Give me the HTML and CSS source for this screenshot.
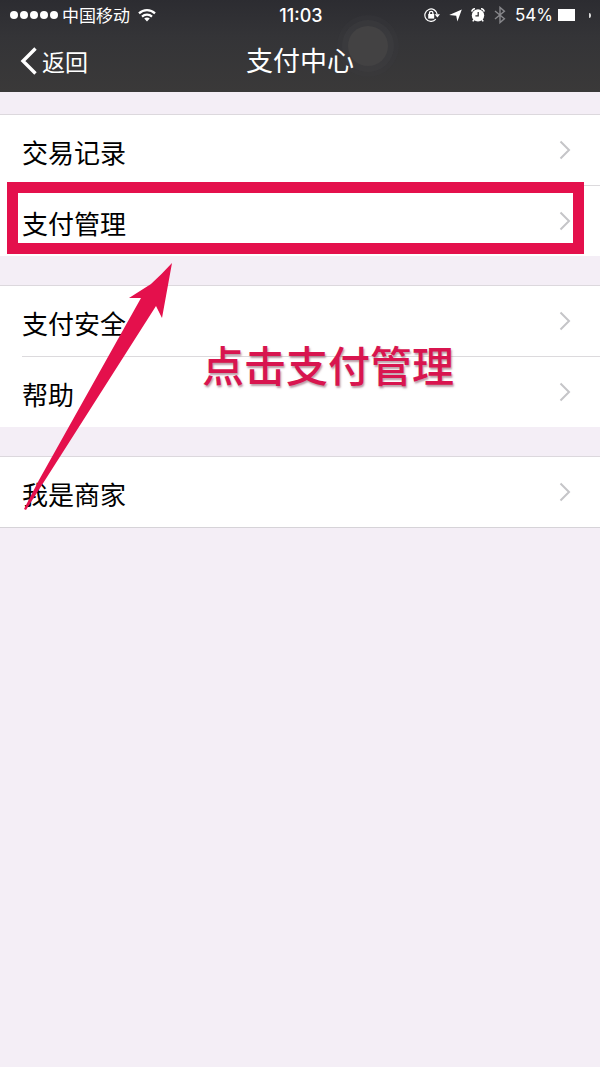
FILE: index.html
```html
<!DOCTYPE html>
<html lang="zh-CN">
<head>
  <meta charset="UTF-8">
  <meta name="viewport" content="width=device-width, initial-scale=1.0">
  <title>支付中心</title>
  <link rel="stylesheet" href="styles.css">
</head>
<body>
  <header class="header">
    <div class="status-bar">
      <div class="status-left">
        <div class="signal">
          <span class="dot"></span>
          <span class="dot"></span>
          <span class="dot"></span>
          <span class="dot"></span>
          <span class="dot"></span>
        </div>
        <span class="carrier">中国移动</span>
        <svg class="wifi" width="18" height="14" viewBox="0 0 18 14" fill="none" stroke="#fff" stroke-width="2.2">
          <path d="M1 5.4C5.4 1 12.6 1 17 5.4"/>
          <path d="M4 8.6C6.8 6 11.2 6 14 8.6"/>
          <path d="M9 13.4L6.2 10.6C7.8 9.2 10.2 9.2 11.8 10.6Z" fill="#fff" stroke="none"/>
        </svg>
      </div>
      <span class="time">11:03</span>
      <div class="status-right">
        <svg width="16" height="14" viewBox="0 0 16 14" fill="none" stroke="#fff">
          <path d="M11.8 11.2A6.2 6.2 0 1 1 13.2 6.4" stroke-width="1.2"/>
          <path d="M10.6 6.2H16L13.4 9.6Z" fill="#fff" stroke="none"/>
          <path d="M5.5 6.5V5a1.7 1.7 0 0 1 3.4 0V6.5" stroke-width="1.3"/>
          <rect x="4.2" y="6" width="6" height="4.6" fill="#fff" stroke="none"/>
        </svg>
        <svg width="13" height="13" viewBox="0 0 13 13" fill="#fff">
          <path d="M12.8 0.4L8.4 12.6L7.2 6.8L0.2 6Z"/>
        </svg>
        <svg width="14" height="14" viewBox="0 0 14 14">
          <circle cx="7" cy="7.4" r="6.2" fill="#fff"/>
          <path d="M0.8 3.6A3 3 0 0 1 4 0.8M10 0.8A3 3 0 0 1 13.2 3.6M3.2 11.4L1.8 13.4M10.8 11.4L12.2 13.4" fill="none" stroke="#fff" stroke-width="1.6"/>
          <path d="M7.2 4V7.8H4.4" fill="none" stroke="#333336" stroke-width="1.3"/>
        </svg>
        <svg width="12" height="18" viewBox="0 0 12 18" fill="none" stroke="#87878b" stroke-width="1.4">
          <path d="M1 5L10.4 12.8L6 16.6V1.4L10.4 5.2L1 13"/>
        </svg>
        <span class="percent">54%</span>
        <span class="battery"></span>
      </div>
    </div>
    <nav class="nav-bar">
      <a class="back" href="#">
        <svg width="17" height="28" viewBox="0 0 17 28" fill="none" stroke="#fff" stroke-width="3.4">
          <path d="M15.5 1.5L3 14L15.5 26.5"/>
        </svg>
        返回
      </a>
      <h1 class="title">支付中心</h1>
      <span class="touch-dot"></span>
    </nav>
  </header>

  <main class="content">
    <section class="group">
      <a class="row" href="#">交易记录
        <svg class="chevron" viewBox="0 0 12 20"><path d="M1.5 1.5L10 10L1.5 18.5"/></svg>
      </a>
      <a class="row highlighted" href="#">支付管理
        <svg class="chevron" viewBox="0 0 12 20"><path d="M1.5 1.5L10 10L1.5 18.5"/></svg>
      </a>
    </section>

    <section class="group">
      <a class="row" href="#">支付安全
        <svg class="chevron" viewBox="0 0 12 20"><path d="M1.5 1.5L10 10L1.5 18.5"/></svg>
      </a>
      <a class="row" href="#">帮助
        <svg class="chevron" viewBox="0 0 12 20"><path d="M1.5 1.5L10 10L1.5 18.5"/></svg>
      </a>
    </section>

    <section class="group group-last">
      <a class="row" href="#">我是商家
        <svg class="chevron" viewBox="0 0 12 20"><path d="M1.5 1.5L10 10L1.5 18.5"/></svg>
      </a>
    </section>

    <!-- guide arrow and label over the list -->
    <svg class="arrow" width="150" height="250" viewBox="0 0 150 250">
      <path d="M148 0L138 55L132 43L2 247L0 246L15 217L117 35H105Q116 28 127 21Q137 12 148 0Z"/>
    </svg>
    <p class="callout">点击支付管理</p>
  </main>
</body>
</html>
```

FILE: styles.css
```css
*,
*::before,
*::after {
  margin: 0;
  padding: 0;
  box-sizing: border-box;
}

body {
  font-family: "Noto Sans CJK SC", "Liberation Sans", sans-serif;
  background: #f4eef6;
  color: #000;
  min-height: 100vh;
}

a {
  color: inherit;
  text-decoration: none;
}

.header {
  background: linear-gradient(#2c2c31, #343437 40%, #3a3939);
  color: #fff;
}

/* status bar */
.status-bar {
  display: grid;
  grid-template-columns: 1fr auto 1fr;
  align-items: center;
  height: 30px;
  padding: 0 8px 0 10px;
}

.status-left {
  display: flex;
  align-items: center;
}

.signal {
  display: flex;
  gap: 2px;
  margin-right: 4px;
}

.dot {
  width: 8px;
  height: 8px;
  border-radius: 50%;
  background: #fff;
}

.carrier {
  font-size: 17px;
  line-height: 24px;
  margin-right: 8px;
}

.time {
  font-family: Inter, sans-serif;
  font-size: 18px;
  font-weight: 500;
}

.status-right {
  display: flex;
  align-items: center;
  justify-content: flex-end;
  gap: 9px;
}

.percent {
  font-family: Inter, sans-serif;
  font-size: 17px;
}

.battery {
  position: relative;
  width: 17px;
  height: 12px;
  margin-left: -4px;
  margin-right: 17px;
  background: #fff;
}

.battery::after {
  content: "";
  position: absolute;
  top: 4px;
  right: -16px;
  width: 2px;
  height: 5px;
  border-radius: 0 2px 2px 0;
  background: #dcdcdc;
}

/* navigation bar */
.nav-bar {
  position: relative;
  display: grid;
  grid-template-columns: 1fr auto 1fr;
  align-items: center;
  height: 62px;
  padding: 0 20px;
}

.back {
  display: flex;
  align-items: center;
  gap: 5px;
  font-size: 23px;
  line-height: 32px;
}

.title {
  position: relative;
  z-index: 1;
  font-size: 27px;
  line-height: 36px;
  font-weight: 400;
  padding-bottom: 2px;
}

.touch-dot {
  position: absolute;
  top: -4px;
  left: 58%;
  width: 40px;
  height: 40px;
  border-radius: 50%;
  background: #434243;
  box-shadow: 0 0 0 6px rgba(66, 66, 70, 0.35), 0 0 0 11px rgba(60, 60, 65, 0.25);
}

/* list */
.content {
  position: relative;
  padding-top: 22px;
}

.group {
  background: #fff;
  border-top: 1px solid #dcd8dd;
  margin-bottom: 29px;
}

.group-last {
  border-bottom: 1px solid #d6d3d8;
}

.row {
  position: relative;
  display: flex;
  align-items: center;
  justify-content: space-between;
  height: 70px;
  padding: 4px 29px 0 22px;
  font-size: 26px;
  line-height: 36px;
}

.row + .row {
  height: 71px;
}

.row + .row::before {
  content: "";
  position: absolute;
  top: 0;
  left: 22px;
  right: 0;
  height: 1px;
  background: #dcdadd;
}

.chevron {
  width: 12px;
  height: 20px;
  margin-bottom: 4px;
  fill: none;
  stroke: #c5c5c8;
  stroke-width: 2;
}

.highlighted::after {
  content: "";
  position: absolute;
  top: -3px;
  left: 7px;
  right: 16px;
  height: 72px;
  border: 11px solid #e4104c;
}

/* guide */
.arrow {
  position: absolute;
  top: 171px;
  left: 24px;
  fill: #e4104c;
}

.callout {
  position: absolute;
  top: 242px;
  left: 202px;
  font-size: 42px;
  line-height: 60px;
  font-weight: 500;
  white-space: nowrap;
  color: #d8154f;
  text-shadow: 1px 2px 2px rgba(120, 60, 80, 0.5);
}
```
